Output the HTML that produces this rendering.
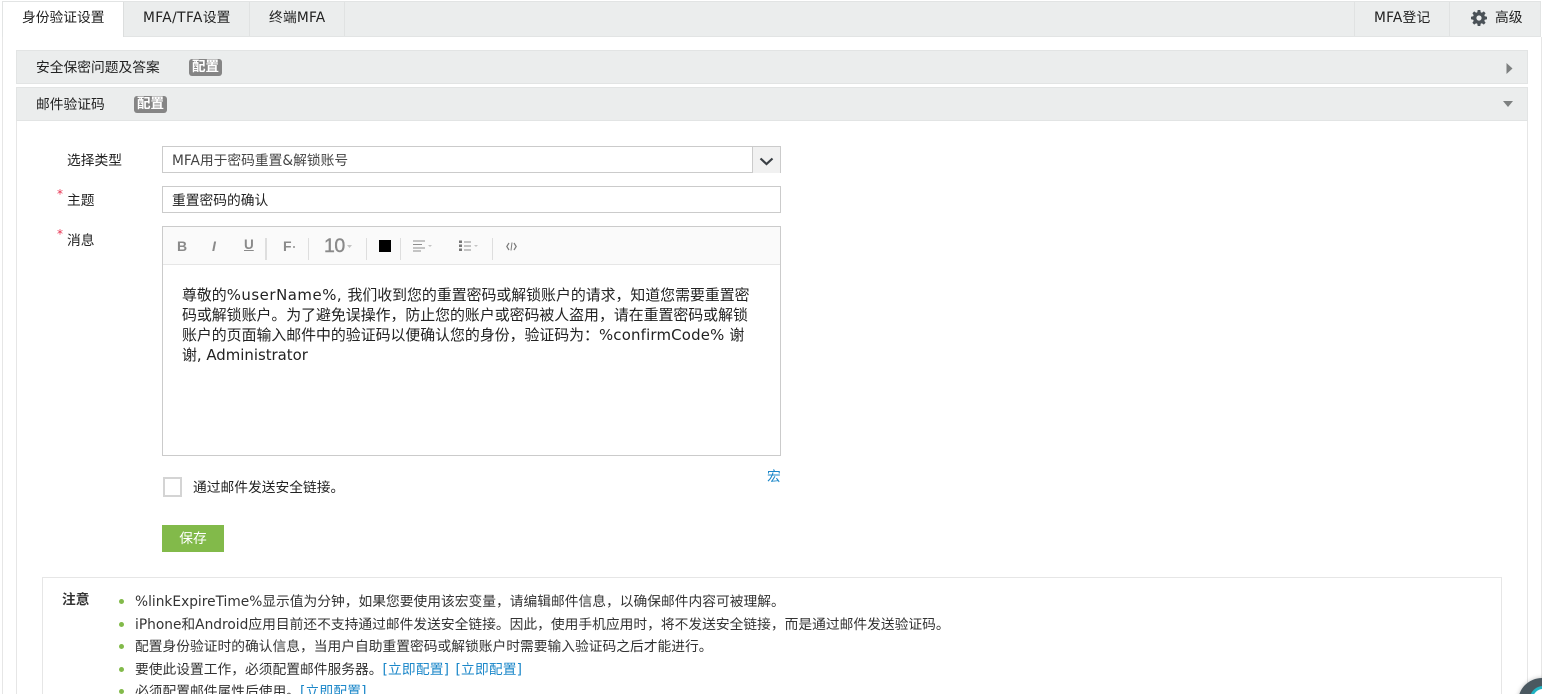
<!DOCTYPE html>
<html><head><meta charset="utf-8">
<style>
*{box-sizing:border-box}
html,body{margin:0;padding:0;width:1542px;height:694px;overflow:hidden;background:#fff}
body{position:relative;font-family:"DejaVu Sans","Noto Sans CJK SC",sans-serif;font-size:13.75px;color:#222}
.a{position:absolute;white-space:nowrap}
.t{line-height:18px;height:18px}
.badge{position:absolute;background:#858585;color:#fff;border-radius:3px;font-size:13.5px;line-height:17px;height:17px;width:33px;text-align:center;font-weight:bold}
.panel{position:absolute;left:16px;width:1512px;background:#ebeded;border:1px solid #e2e4e4;height:34px}
.input{position:absolute;left:162px;width:619px;height:27px;border:1px solid #cbcbcb;background:#fff}
.sep{position:absolute;top:238px;width:1px;height:22px;background:#dedede}
.tb{position:absolute;color:#8a8a8a;white-space:nowrap}
.li{position:absolute;left:135px;white-space:nowrap;line-height:18px;height:18px;color:#333}
.dot{position:absolute;left:119px;width:5px;height:5px;border-radius:50%;background:#82ba4a}
.l{color:#1b87c9;letter-spacing:.15px}
</style></head>
<body>
<!-- tab bar -->
<div class="a" style="left:2px;top:1px;width:1539px;height:36px;background:#ebeded;border:1px solid #e2e4e4"></div>
<div class="a" style="left:3px;top:2px;width:121px;height:35px;background:#fff;border-right:1px solid #dcdede"></div>
<div class="a" style="left:249px;top:2px;width:1px;height:34px;background:#e0e2e2"></div>
<div class="a" style="left:344px;top:2px;width:1px;height:34px;background:#e0e2e2"></div>
<div class="a" style="left:1354px;top:2px;width:1px;height:34px;background:#e0e2e2"></div>
<div class="a" style="left:1449px;top:2px;width:1px;height:34px;background:#e0e2e2"></div>
<div class="a t" style="left:22px;top:9px">身份验证设置</div>
<div class="a t" style="left:143px;top:9px"><span style="letter-spacing:.4px">MFA/TFA</span>设置</div>
<div class="a t" style="left:269px;top:9px"><span style="letter-spacing:.2px">终端MFA</span></div>
<div class="a t" style="left:1374px;top:9px"><span style="letter-spacing:.2px">MFA登记</span></div>
<div class="a t" style="left:1495px;top:9px">高级</div>
<svg class="a" style="left:1471px;top:10px" width="16" height="16" viewBox="0 0 16 16"><path fill="#4a5157" fill-rule="evenodd" d="M6.7 0h2.6l.4 2.2 1.2.5L12.8 1.400l1.800 1.800-1.300 1.900.5 1.200 2.200.4v2.600l-2.200.4-.5 1.200 1.300 1.900-1.800 1.800-1.900-1.300-1.200.5-.4 2.200H6.700l-.4-2.200-1.200-.5-1.900 1.300-1.800-1.800 1.300-1.900-.5-1.200L0 9.300V6.700l2.200-.4.500-1.200L1.400 3.200l1.800-1.800 1.900 1.300 1.200-.5zM8 5.400a2.600 2.600 0 1 0 0 5.200 2.600 2.600 0 0 0 0-5.200z"/></svg>
<!-- outer borders -->
<div class="a" style="left:2px;top:37px;width:1px;height:657px;background:#e6e6e6"></div>
<div class="a" style="left:1541px;top:37px;width:1px;height:657px;background:#e6e6e6"></div>
<!-- panels -->
<div class="panel" style="top:50px"></div>
<div class="a t" style="left:36px;top:59px">安全保密问题及答案</div>
<div class="badge" style="left:189px;top:59px">配置</div>
<svg class="a" style="left:1506px;top:63px" width="7" height="11"><path d="M0.500 0L6.500 5.500 0.500 11z" fill="#7d8080"/></svg>
<div class="panel" style="top:87px"></div>
<div class="a t" style="left:36px;top:96px">邮件验证码</div>
<div class="badge" style="left:134px;top:96px">配置</div>
<svg class="a" style="left:1503px;top:101px" width="11" height="7"><path d="M0 0H10L5 6z" fill="#7d8080"/></svg>
<div class="a" style="left:16px;top:121px;width:1px;height:573px;background:#e6e6e6"></div>
<div class="a" style="left:1527px;top:121px;width:1px;height:573px;background:#e6e6e6"></div>
<!-- form -->
<div class="a t" style="left:67px;top:152px">选择类型</div>
<div class="input" style="top:146px"></div>
<div class="a" style="left:752px;top:147px;width:28px;height:26px;background:#f1f1f1;border-left:1px solid #cbcbcb"></div>
<svg class="a" style="left:759px;top:157px" width="15" height="9"><path d="M1.500 1.500L7.500 7 13.500 1.500" fill="none" stroke="#3b4045" stroke-width="2.200"/></svg>
<div class="a t" style="left:172px;top:152px;color:#444">MFA用于密码重置&amp;解锁账号</div>
<div class="a" style="left:57px;top:187px;color:#e8304f;font-size:12px;line-height:14px">*</div>
<div class="a t" style="left:67px;top:192px">主题</div>
<div class="input" style="top:186px"></div>
<div class="a t" style="left:172px;top:192px">重置密码的确认</div>
<div class="a" style="left:57px;top:227px;color:#e8304f;font-size:12px;line-height:14px">*</div>
<div class="a t" style="left:67px;top:232px">消息</div>
<!-- editor -->
<div class="a" style="left:162px;top:226px;width:619px;height:230px;border:1px solid #cbcbcb;background:#fff"></div>
<div class="a" style="left:163px;top:227px;width:617px;height:38px;background:#fafafa;border-bottom:1px solid #e6e6e6"></div>
<div class="tb" style="left:177px;top:237px;font-size:14px;line-height:18px;font-family:'Liberation Sans',sans-serif;font-weight:bold">B</div>
<div class="tb" style="left:212px;top:237px;font-size:14px;line-height:18px;font-style:italic;font-family:'Liberation Sans',sans-serif;font-weight:bold">I</div>
<div class="tb" style="left:244px;top:236px;font-size:13.5px;line-height:18px;text-decoration:underline;font-family:'Liberation Sans',sans-serif;font-weight:bold">U</div>
<div class="sep" style="left:265px;width:2px"></div>
<div class="tb" style="left:283px;top:237px;font-size:14px;line-height:18px;font-family:'Liberation Sans',sans-serif;font-weight:bold">F</div>
<div class="a" style="left:293px;top:246px;width:2px;height:2px;background:#aaa"></div>
<div class="sep" style="left:308px"></div>
<div class="tb" style="left:324px;top:236px;line-height:21px;letter-spacing:-.5px;font-family:'Liberation Sans',sans-serif;font-size:19.5px;-webkit-text-stroke:.4px #8a8a8a">10</div>
<svg class="a" style="left:347px;top:245px" width="6" height="3"><path d="M0 0H5L2.500 3z" fill="#c4c4c4"/></svg>
<div class="sep" style="left:366px"></div>
<div class="a" style="left:379px;top:240px;width:12px;height:12px;background:#000"></div>
<div class="sep" style="left:400px"></div>
<svg class="a" style="left:413px;top:240px" width="20" height="12"><path d="M0 1H12M0 4.500H9M0 8H12M0 11H8" stroke="#8e8e8e" stroke-width="1"/><path d="M15 5H19L17 7z" fill="#c4c4c4"/></svg>
<svg class="a" style="left:459px;top:240px" width="21" height="12"><path d="M0 0.500h3v2.500h-3zM0 4.500h3v2.500h-3zM0 8.500h3v2.500h-3z" fill="#777"/><path d="M5 2H12M5 6H12M5 10H12" stroke="#8e8e8e" stroke-width="1"/><path d="M15 5H19L17 7z" fill="#c4c4c4"/></svg>
<div class="sep" style="left:492px"></div>
<svg class="a" style="left:506px;top:242px" width="11" height="9"><path d="M3 1L0.800 4.500 3 8M8 1L10.200 4.500 8 8" stroke="#7a7a7a" stroke-width="1.200" fill="none"/><path d="M6 0.500L5 8.500" stroke="#7a7a7a" stroke-width="1"/></svg>
<div class="a" style="left:182px;top:285px;width:580px;font-size:14.9px;line-height:20px;color:#222">
<div>尊敬的<span style="letter-spacing:.55px">%userName%, </span>我们收到您的重置密码或解锁账户的请求，知道您需要重置密</div>
<div>码或解锁账户。为了避免误操作，防止您的账户或密码被人盗用，请在重置密码或解锁</div>
<div>账户的页面输入邮件中的验证码以便确认您的身份，验证码为：<span style="letter-spacing:.2px">%confirmCode% </span>谢</div>
<div>谢, Administrator</div>
</div>
<!-- macro, checkbox, save -->
<div class="a t l" style="left:767px;top:468px">宏</div>
<div class="a" style="left:163px;top:477px;width:19px;height:20px;border:2px solid #d4d4d4;background:#fff"></div>
<div class="a t" style="left:193px;top:479px">通过邮件发送安全链接。</div>
<div class="a" style="left:162px;top:525px;width:62px;height:27px;background:#82ba4a;color:#fff;text-align:center;line-height:29px">保存</div>
<!-- note -->
<div class="a" style="left:42px;top:577px;width:1460px;height:130px;border:1px solid #e6e6e6;background:#fff"></div>
<div class="a t" style="left:62px;top:591px;font-weight:bold;color:#333">注意</div>
<div class="dot" style="top:599px"></div>
<div class="li" style="top:593px">%linkExpireTime%显示值为分钟，如果您要使用该宏变量，请编辑邮件信息，以确保邮件内容可被理解。</div>
<div class="dot" style="top:622px"></div>
<div class="li" style="top:616px">iPhone和Android应用目前还不支持通过邮件发送安全链接。因此，使用手机应用时，将不发送安全链接，而是通过邮件发送验证码。</div>
<div class="dot" style="top:644px"></div>
<div class="li" style="top:638px">配置身份验证时的确认信息，当用户自助重置密码或解锁账户时需要输入验证码之后才能进行。</div>
<div class="dot" style="top:667px"></div>
<div class="li" style="top:661px">要使此设置工作，必须配置邮件服务器。<span class="l">[立即配置]</span> <span class="l" style="margin-left:2px">[立即配置]</span></div>
<div class="dot" style="top:689px"></div>
<div class="li" style="top:683px">必须配置邮件属性后使用。<span class="l">[立即配置]</span></div>
<!-- floating circle -->
<div class="a" style="left:1518px;top:678px;width:48px;height:48px;border-radius:50%;background:#4a5860;box-shadow:0 0 5px rgba(0,0,0,.25)"></div>
<div class="a" style="left:1530px;top:686px;width:26px;height:26px;border-radius:50%;border:3px solid #22b5c4;background:#fff"></div>
</body></html>
